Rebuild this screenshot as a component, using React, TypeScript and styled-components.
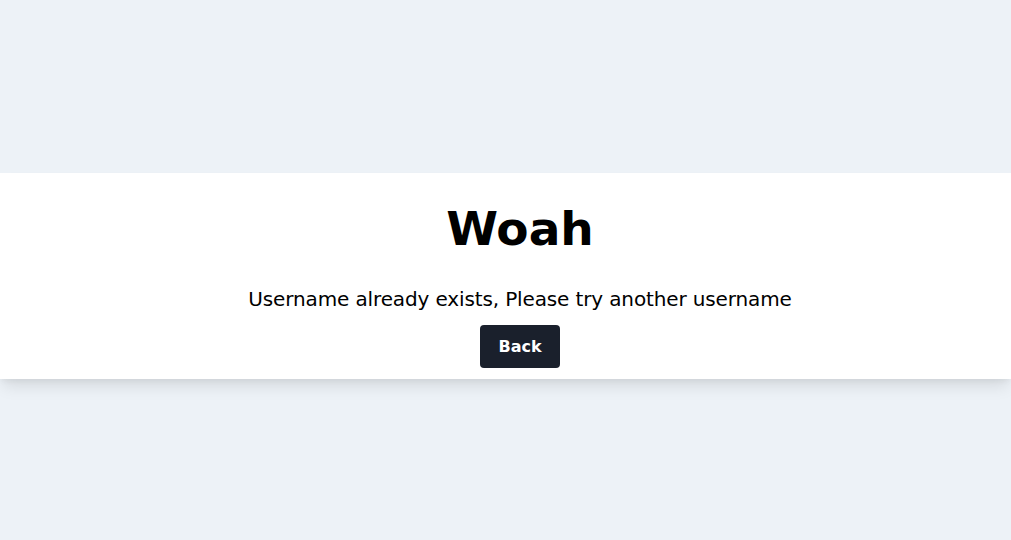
import styled, { createGlobalStyle } from "styled-components";

const GlobalStyle = createGlobalStyle`
  html, body {
    margin: 0;
    padding: 0;
    background: #edf2f7;
    font-family: "DejaVu Sans", "Open Sans", sans-serif;
  }
`

const Page = styled.div`
  min-height: 540px;
  padding-top: 173px;
  box-sizing: border-box;
`

// content sits a little right of the window centre in the original
const Band = styled.section`
  background: #fff;
  display: flex;
  flex-direction: column;
  align-items: center;
  padding: 24px 0 11px 29px;
  box-shadow: 0 10px 15px -3px rgba(0, 0, 0, 0.1), 0 4px 6px -2px rgba(0, 0, 0, 0.05);
`

const Title = styled.h1`
  margin: 0;
  font-size: 47px;
  line-height: 64px;
  font-weight: 700;
  color: #000;
`

const Message = styled.p`
  margin: 24px 0 0;
  font-size: 20px;
  line-height: 28px;
  letter-spacing: -0.13px;
  color: #000;
`

const BackButton = styled.button`
  margin-top: 12px;
  height: 43px;
  padding: 0 18.5px;
  border: none;
  border-radius: 4px;
  background: #1a202c;
  color: #fff;
  font-family: inherit;
  font-size: 16px;
  font-weight: 700;
  cursor: pointer;
`

export default function App() {
  return (
    <>
      <GlobalStyle />
      <Page>
        <Band>
          <Title>Woah</Title>
          <Message>Username already exists, Please try another username</Message>
          <BackButton>Back</BackButton>
        </Band>
      </Page>
    </>
  )
}
